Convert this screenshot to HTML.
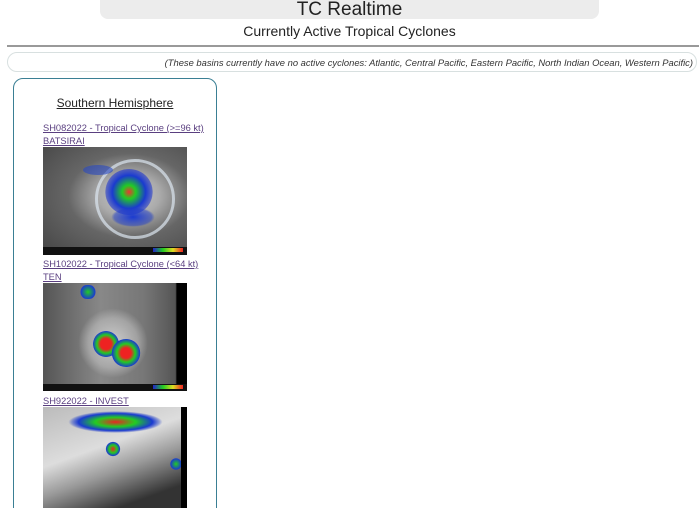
<!DOCTYPE html>
<html style="height:508px;overflow:hidden"><head><meta charset="utf-8"><style>
*{margin:0;padding:0;box-sizing:border-box}
body{width:699px;height:508px;overflow:hidden;background:#fff;font-family:"Liberation Sans",sans-serif;position:relative;color:#222}
.bar{position:absolute;left:100px;top:-10px;width:499px;height:29px;background:#ececec;border-radius:8px}
.t1{position:absolute;left:0;width:699px;top:-1px;text-align:center;font-size:19px;color:#222}
.t2{position:absolute;left:0;width:699px;top:23px;text-align:center;font-size:14px;color:#222}
.hr{position:absolute;left:7px;right:0;top:45px;height:2px;background:#999}
.note{position:absolute;left:7px;right:2px;top:52px;height:20px;border:1px solid #d8e0e0;border-radius:10px;font-size:9.4px;font-style:italic;text-align:right;padding:4px 3px 0 0;color:#333}
.panel{position:absolute;left:13px;top:78px;width:204px;height:440px;border:1.5px solid #3a7f94;border-radius:10px}
.sh{position:absolute;width:204px;top:96px;text-align:center;font-size:12px;text-decoration:underline;color:#222}
.lk{position:absolute;left:43px;font-size:9.3px;color:#5a3f80;text-decoration:underline;white-space:nowrap}
.img{position:absolute;left:43px;width:144px;overflow:hidden}
.img i{position:absolute;border-radius:50%}
</style></head><body>
<div class="bar"></div>
<div class="t1">TC Realtime</div>
<div class="t2">Currently Active Tropical Cyclones</div>
<div class="hr"></div>
<div class="note">(These basins currently have no active cyclones: Atlantic, Central Pacific, Eastern Pacific, North Indian Ocean, Western Pacific)</div>
<div class="panel"></div>
<div class="sh" style="left:13px">Southern Hemisphere</div>
<div class="lk" style="top:123px">SH082022 - Tropical Cyclone (&gt;=96 kt)</div>
<div class="lk" style="top:136px">BATSIRAI</div>
<div class="img" style="top:147px;height:108px;background:radial-gradient(ellipse at 60% 45%,#ccc 0,#aaa 25%,#666 50%,#444 100%)">
 <i style="left:52px;top:12px;width:80px;height:80px;border:3px solid rgba(220,230,240,.7);background:transparent"></i>
 <i style="left:62px;top:22px;width:48px;height:46px;background:radial-gradient(circle,#e33 0,#2c2 20%,#1a3ad0 50%,rgba(40,60,200,.6) 70%,transparent 72%)"></i>
 <i style="left:68px;top:60px;width:44px;height:20px;background:radial-gradient(ellipse,#1a3ad0 0,rgba(30,60,200,.5) 60%,transparent 70%)"></i>
 <i style="left:40px;top:18px;width:30px;height:10px;background:#2848c0;opacity:.6"></i>
 <div style="position:absolute;left:0;right:0;top:100px;height:8px;background:#111"></div>
 <div style="position:absolute;left:110px;top:101px;width:30px;height:4px;background:linear-gradient(90deg,#22c,#2c2,#dd2,#e22)"></div>
</div>
<div class="lk" style="top:259px">SH102022 - Tropical Cyclone (&lt;64 kt)</div>
<div class="lk" style="top:272px">TEN</div>
<div class="img" style="top:283px;height:108px;background:linear-gradient(90deg,#555 0,#888 40%,#777 70%,#555 92%,#000 93%)">
 <i style="left:35px;top:25px;width:70px;height:70px;background:radial-gradient(circle,#ccc 0,rgba(200,200,200,.5) 50%,transparent 70%)"></i>
 <i style="left:50px;top:48px;width:26px;height:26px;background:radial-gradient(circle,#e22 0,#e22 30%,#2c2 50%,#1a3ad0 70%,transparent 72%)"></i>
 <i style="left:68px;top:56px;width:30px;height:28px;background:radial-gradient(circle,#e22 0,#e22 25%,#2c2 45%,#1a3ad0 68%,transparent 70%)"></i>
 <i style="left:34px;top:2px;width:22px;height:14px;background:radial-gradient(circle,#2c2 0,#1a3ad0 55%,transparent 60%)"></i>
 <div style="position:absolute;left:0;right:0;top:101px;height:7px;background:#111"></div>
 <div style="position:absolute;left:110px;top:102px;width:30px;height:4px;background:linear-gradient(90deg,#22c,#2c2,#dd2,#e22)"></div>
</div>
<div class="lk" style="top:396px">SH922022 - INVEST</div>
<div class="img" style="top:407px;height:101px;background:linear-gradient(160deg,#bbb 0,#ddd 40%,#999 60%,#333 85%);border-right:6px solid #000">
 <i style="left:25px;top:4px;width:95px;height:22px;background:radial-gradient(ellipse,#e22 0,#2c2 30%,#1a3ad0 55%,rgba(30,60,200,.4) 65%,transparent 70%)"></i>
 <i style="left:62px;top:34px;width:16px;height:16px;background:radial-gradient(circle,#e22 0,#2c2 35%,#1a3ad0 60%,transparent 65%)"></i>
 <i style="left:126px;top:50px;width:14px;height:14px;background:radial-gradient(circle,#2c2 0,#1a3ad0 55%,transparent 60%)"></i>
</div>
</body></html>
